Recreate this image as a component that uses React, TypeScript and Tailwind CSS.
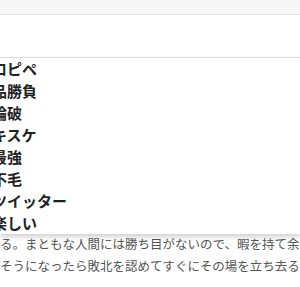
const items = ['ロピペ', '品勝負', '論破', 'キスケ', '最強', '不毛', 'ツイッター', '楽しい'];

export default function App() {
    return (
        <div className="relative h-[287px] w-[300px] overflow-hidden bg-white" style={{ fontFamily: '"Noto Sans CJK JP", "Noto Sans", sans-serif' }}>
            {/* top bar */}
            <div className="h-[15px] bg-[#f7f7f7] border-b border-[#e3e3e3]" />
            {/* search area */}
            <div className="h-[42px] bg-white" />

            {/* article content under the dropdown */}
            <div className="pt-[161px]">
                <div className="whitespace-nowrap text-[12px] leading-[15px] text-[#888]">
                    投稿者：名無しさん 2016-05-06 (金) 14:20:17 ID:a8wVxKq0
                </div>
                <div className="text-[12.5px] leading-[22px] text-[#555] whitespace-nowrap">
                    <div>る。まともな人間には勝ち目がないので、暇を持て余した</div>
                    <div>そうになったら敗北を認めてすぐにその場を立ち去るべき</div>
                </div>
            </div>

            {/* suggestion dropdown */}
            <div className="absolute left-0 right-0 top-[57px] z-10 bg-white border-t border-[#dcdcdc] shadow-[0_3px_5px_rgba(0,0,0,0.18)]">
                <ul className="ml-[-8px]">
                    {items.map(item => (
                        <li key={item} className="text-[15px] font-bold leading-[22px] text-[#222] whitespace-nowrap">{item}</li>
                    ))}
                </ul>
            </div>
        </div>
    );
}
